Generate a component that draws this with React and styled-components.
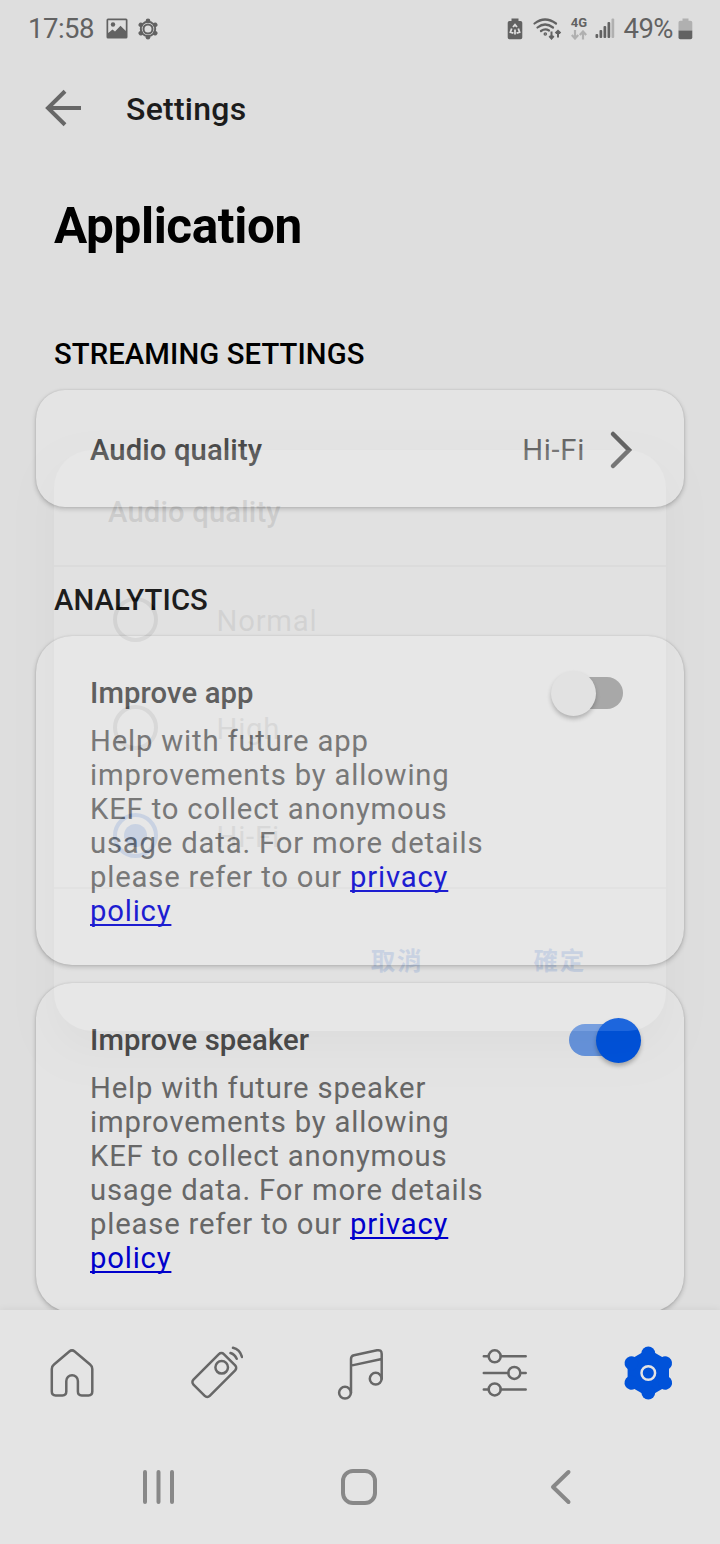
import { useState } from 'react'
import styled, { createGlobalStyle } from 'styled-components'

const GlobalStyle = createGlobalStyle`
    * {
        box-sizing: border-box;
    }

    body {
        margin: 0;
        background: #dedede;
        font-family: Roboto, 'Noto Sans CJK TC', sans-serif;
        font-size: 29.25px;
        line-height: 34px;
    }
`

const Screen = styled('div')`
    display: flex;
    position: relative;
    width: 720px;
    height: 1544px;
    flex-direction: column;
    overflow: hidden;
`

const StatusBar = styled('div')`
    display: flex;
    flex-shrink: 0;
    height: 54px;
    padding: 3px 27px 0 28px;
    align-items: center;
    justify-content: space-between;
    color: #626262;
    font-size: 27.5px;
    letter-spacing: -0.5px;
`

const StatusGroup = styled('div')`
    display: flex;
    align-items: center;
    gap: ${(p) => p.$gap}px;
`

const Header = styled('div')`
    display: flex;
    flex-shrink: 0;
    height: 108px;
    padding-left: 42px;
    align-items: center;
    gap: 42px;
    color: #1c1c1c;
    font-size: 32px;
    font-weight: 500;
    letter-spacing: 0.25px;
`

const HeaderTitle = styled('span')`
    padding-top: 2px;
`

const Content = styled('div')`
    display: flex;
    flex-grow: 1;
    min-height: 0;
    padding: 35px 36px 0;
    flex-direction: column;
    overflow: hidden;
`

const Title = styled('h1')`
    flex-shrink: 0;
    margin: 0 18px 82px;
    color: #000;
    font-size: 49.5px;
    font-weight: 700;
    line-height: 58px;
    letter-spacing: -0.4px;
`

const SectionTitle = styled('h2')`
    flex-shrink: 0;
    margin: 0 18px 19px;
    color: #000;
    font-size: 29.25px;
    font-weight: 500;
    line-height: 34px;
    letter-spacing: 0.1px;
`

const Card = styled('div')`
    display: flex;
    flex-shrink: 0;
    justify-content: space-between;
    background: #e4e4e4;
    box-shadow:
        0 0 2px rgba(0, 0, 0, 0.13),
        0 2px 5px rgba(0, 0, 0, 0.22);
`

const LinkCard = styled(Card)`
    height: 117px;
    margin-bottom: 76px;
    padding: 3px 50px 0 54px;
    align-items: center;
    border-radius: 29px;
`

const SwitchCard = styled(Card)`
    height: 329px;
    margin-bottom: 18px;
    padding: 40px 43.5px 0 54px;
    border-radius: 36px;
`

const Label = styled('div')`
    color: #4a4a4a;
    font-weight: 500;
    letter-spacing: 0.1px;
`

const Value = styled('div')`
    display: flex;
    align-items: center;
    gap: 23px;
    color: #676767;
    letter-spacing: 0.7px;
`

const Texts = styled('div')`
    width: 410px;
`

const Description = styled('p')`
    margin: 14px 0 0;
    color: #676767;
    letter-spacing: 0.82px;

    a {
        color: #0000cc;
        text-decoration: underline;
        text-decoration-thickness: 2px;
        text-underline-offset: 3px;
        text-decoration-skip-ink: none;
    }
`

const Switch = styled('button')`
    display: flex;
    width: 90px;
    height: 45px;
    margin-top: -5.5px;
    padding: 0 18px;
    align-items: center;
    border: 0;
    background: none;
`

const Track = styled('span')`
    display: flex;
    width: 54px;
    height: 32px;
    align-items: center;
    justify-content: ${(p) => (p.$on ? 'flex-end' : 'flex-start')};
    border-radius: 16px;
    background: ${(p) => (p.$on ? '#6693db' : '#9d9d9d')};
`

const Thumb = styled('span')`
    flex-shrink: 0;
    width: 45px;
    height: 45px;
    margin: 0 -18px;
    border-radius: 50%;
    background: ${(p) => (p.$on ? '#0052d9' : '#dfdfdf')};
    box-shadow: 0 3px 4px rgba(0, 0, 0, 0.26);
`

const TabBar = styled('nav')`
    display: flex;
    flex-shrink: 0;
    height: 126px;
    background: #e4e4e4;
    box-shadow: 0 0 8px rgba(0, 0, 0, 0.07);
    z-index: 1;
`

const Tab = styled('div')`
    display: flex;
    flex: 1;
    align-items: center;
    justify-content: center;
    color: #676767;
`

const SystemNav = styled('div')`
    display: flex;
    flex-shrink: 0;
    height: 108px;
    padding: 0 59px 6px 57px;
    background: #e4e4e4;
    z-index: 1;
`

const SystemKey = styled(Tab)`
    color: #888;
`

const Dialog = styled('div')`
    display: flex;
    position: absolute;
    top: 450px;
    left: 54px;
    width: 612px;
    height: 581px;
    flex-direction: column;
    border-radius: 38px;
    background: #fff;
    box-shadow: 0 18px 36px rgba(0, 0, 0, 0.25);
    opacity: 0.112;
    pointer-events: none;
    z-index: 2;
`

const DialogTitle = styled('div')`
    height: 117px;
    padding: 45px 54px 0;
    border-bottom: 2px solid #c8c8c8;
    color: #4a4a4a;
    font-weight: 500;
    letter-spacing: 0.15px;
`

const Options = styled('div')`
    height: 322px;
    border-bottom: 2px solid #d4d4d4;
`

const Option = styled('div')`
    display: flex;
    height: 108px;
    padding: 0 0 3px 58.5px;
    align-items: center;
    gap: 59px;
    color: #808080;
    letter-spacing: 0.8px;
`

const OptionText = styled('span')`
    padding-top: 2px;
`

const Radio = styled('span')`
    display: flex;
    width: 45px;
    height: 45px;
    align-items: center;
    justify-content: center;
    border: 4px solid ${(p) => (p.$checked ? '#0052d9' : '#808080')};
    border-radius: 50%;

    &::after {
        content: '';
        width: 23px;
        height: 23px;
        border-radius: 50%;
        background: ${(p) => (p.$checked ? '#0052d9' : 'transparent')};
    }
`

const DialogActions = styled('div')`
    display: flex;
    padding: 56px 80px 0 0;
    justify-content: flex-end;
    gap: 110px;
    color: #0052d9;
    font-size: 24.5px;
    font-weight: 700;
    letter-spacing: 1.8px;
`

const Stroke = ({ size = 54, width = 2.5, children }) => (
    <svg
        width={size}
        height={size}
        viewBox={`0 0 ${size} ${size}`}
        fill="none"
        stroke="currentColor"
        strokeWidth={width}
        strokeLinecap="round"
        strokeLinejoin="round"
    >
        {children}
    </svg>
)

const PictureIcon = () => (
    <svg width="22" height="21" viewBox="0 0 22 21" fill="currentColor">
        <path
            fillRule="evenodd"
            d="M2 0.500h18q1.500 0 1.500 1.500v17q0 1.500-1.500 1.500h-18q-1.500 0-1.500-1.500v-17q0-1.500 1.500-1.500zM2.200 2.200v12.800l4.300-3.500 2.500 2 5.500-5.700 5.300 5.200V2.200z"
        />
        <circle cx="7" cy="6.500" r="2.200" />
    </svg>
)

const SmallGearIcon = () => (
    <svg width="20" height="22" viewBox="-10 -11 20 22" fill="currentColor">
        {[0, 60, 120, 180, 240, 300].map((a) => (
            <circle key={a} cy="-8.300" r="2.300" transform={`rotate(${a})`} />
        ))}
        <circle r="7.200" fill="none" stroke="currentColor" strokeWidth="2" />
        <circle r="4.500" fill="none" stroke="currentColor" strokeWidth="2" />
    </svg>
)

const RecycleBatteryIcon = () => (
    <svg width="16" height="22" viewBox="0 0 16 22">
        <path
            d="M4.500 0.500h7v2.500h2q1.800 0 1.800 1.800v14.700q0 1.800-1.800 1.800h-11q-1.800 0-1.800-1.800V4.800Q0.700 3 2.500 3h2z"
            fill="currentColor"
        />
        <path
            d="M6 9L8 6.700l2 2.300M11.300 10.500l1.300 3.700-3 1M8 16.500v-5M4.700 10.500l-1.300 3.700 3 1"
            fill="none"
            stroke="#dedede"
            strokeWidth="1.800"
        />
    </svg>
)

const WifiIcon = () => (
    <svg
        width="29"
        height="22"
        viewBox="0 0 29 22"
        fill="none"
        stroke="currentColor"
        strokeWidth="2.200"
        strokeLinecap="round"
    >
        <path d="M1.500 5.500Q12 -2.500 23 5.500M4.500 9.500Q12 3.500 20 9.500M8 13Q12 10 16 12.500" />
        <circle cx="12.300" cy="16" r="0.700" />
        <path
            d="M18.500 13.500v6.500M16.300 18l2.200 2.500 2.200-2.500M25 19.500v-6.500M22.500 15.300l2.500-2.500 2.500 2.500"
            strokeWidth="2"
            strokeLinecap="butt"
        />
    </svg>
)

const Network = styled('div')`
    display: flex;
    width: 17px;
    flex-direction: column;
    align-items: center;
    gap: 2px;
    font-size: 13px;
    font-weight: 700;
    line-height: 11px;
    letter-spacing: 0;
`

const NetworkIcon = () => (
    <Network>
        4G
        <svg width="16" height="10" viewBox="0 0 16 10" fill="none" stroke="#b0b0b0" strokeWidth="2.200">
            <path d="M4 0v8M0.800 5L4 8.500 7.200 5M12 9.500V2M8.800 5L12 1.500 15.200 5" />
        </svg>
    </Network>
)

const SignalIcon = () => (
    <svg width="20" height="21" viewBox="0 0 20 21" fill="currentColor">
        <rect x="0.500" y="16" width="2.700" height="4" rx="1" />
        <rect x="4.500" y="12" width="2.700" height="8" rx="1" />
        <rect x="8.500" y="8" width="2.700" height="12" rx="1" />
        <rect x="12.500" y="4" width="2.700" height="16" rx="1" />
        <rect x="16.500" y="0.500" width="2.700" height="19.500" rx="1" fill="#b0b0b0" />
    </svg>
)

const BatteryIcon = () => (
    <svg width="15" height="22" viewBox="0 0 15 22">
        <path d="M4.500 0.500h6v2.200h2q1.800 0 1.800 1.800v8H0.500v-8q0-1.800 1.800-1.800h2.200z" fill="#b0b0b0" />
        <path d="M0.500 12.500h13.800v7q0 1.800-1.800 1.800H2.300q-1.800 0-1.800-1.800z" fill="currentColor" />
    </svg>
)

const BackArrowIcon = () => (
    <svg width="42" height="42" viewBox="0 0 42 42" fill="none" stroke="#676767" strokeWidth="4">
        <path d="M23 4.300L6 21l17 16.700M6 21h33" />
    </svg>
)

const ChevronIcon = () => (
    <svg
        width="26"
        height="40"
        viewBox="0 0 26 40"
        fill="none"
        stroke="#646464"
        strokeWidth="4.500"
        strokeLinecap="round"
    >
        <path d="M5 4l16 16L5 36" />
    </svg>
)

const HomeIcon = () => (
    <Stroke>
        <path d="M6.800 23Q6.800 20.300 9 18.500L24.300 5.500Q27 3.300 29.700 5.500L45.100 18.500Q47.300 20.300 47.300 23V45.500Q47.300 49.400 43.500 49.400H36.700Q32.900 49.400 32.900 45.500V35A5.800 5.800 0 0 0 21.300 35V45.500Q21.300 49.400 17.500 49.400H10.600Q6.800 49.400 6.800 45.500Z" />
    </Stroke>
)

const RemoteIcon = () => (
    <Stroke>
        <rect
            x="-21.500"
            y="-11.500"
            width="43"
            height="23"
            rx="3.500"
            transform="translate(25.300 29) rotate(-45)"
        />
        <circle cx="32.700" cy="21.300" r="6.300" />
        <path d="M41.500 7Q45.500 8 47.700 12.800M44 1.800Q51 3.500 53 11" />
    </Stroke>
)

const MusicIcon = () => (
    <Stroke>
        <circle cx="12" cy="46.700" r="5.900" />
        <circle cx="42.700" cy="32.700" r="5.900" />
        <path d="M18 46.700V13Q18 9.800 21 9.200L44 4.300Q48.700 3.400 48.700 8V32.700M18 19.600L48.700 13" />
    </Stroke>
)

const SlidersIcon = () => (
    <Stroke>
        <path d="M6.800 10.300H11.700M23.700 10.300H48.700M6.800 26.900H31.300M43.300 26.900H48.700M6.800 43.400H11.700M23.700 43.400H48.700" />
        <circle cx="17.700" cy="10.300" r="6" />
        <circle cx="37.300" cy="26.900" r="6" />
        <circle cx="17.700" cy="43.400" r="6" />
    </Stroke>
)

const GearIcon = () => (
    <svg width="54" height="54" viewBox="-27.300 -27 54 54" fill="#0052d9">
        <path d="M0 -23.900L20.700 -12V12L0 23.900L-20.700 12V-12Z" />
        {[0, 60, 120, 180, 240, 300].map((a) => (
            <circle key={a} cy="-19.500" r="6.900" transform={`rotate(${a})`} />
        ))}
        <circle r="6.800" fill="none" stroke="#e4e4e4" strokeWidth="2.500" />
    </svg>
)

const tabs = [HomeIcon, RemoteIcon, MusicIcon, SlidersIcon, GearIcon]
const qualities = ['Normal', 'High', 'Hi-Fi']

const Toggle = ({ on, onClick }) => (
    <Switch onClick={onClick}>
        <Track $on={on}>
            <Thumb $on={on} />
        </Track>
    </Switch>
)

const Analytics = ({ name, initial }) => {
    const [on, setOn] = useState(initial)

    return (
        <SwitchCard>
            <Texts>
                <Label>Improve {name}</Label>
                <Description>
                    Help with future {name} improvements by allowing KEF to
                    collect anonymous usage data. For more details please refer
                    to our <a href="#privacy">privacy policy</a>
                </Description>
            </Texts>
            <Toggle on={on} onClick={() => setOn(!on)} />
        </SwitchCard>
    )
}

const App = () => {
    const [quality] = useState('Hi-Fi')

    return (
        <Screen>
            <GlobalStyle />
            <StatusBar>
                <StatusGroup $gap={12}>
                    <span>17:58</span>
                    <StatusGroup $gap={10}>
                        <PictureIcon />
                        <SmallGearIcon />
                    </StatusGroup>
                </StatusGroup>
                <StatusGroup $gap={8}>
                    <StatusGroup $gap={10}>
                        <RecycleBatteryIcon />
                        <WifiIcon />
                    </StatusGroup>
                    <StatusGroup $gap={8}>
                        <NetworkIcon />
                        <SignalIcon />
                    </StatusGroup>
                    <StatusGroup $gap={5}>
                        <span>49%</span>
                        <BatteryIcon />
                    </StatusGroup>
                </StatusGroup>
            </StatusBar>
            <Header>
                <BackArrowIcon />
                <HeaderTitle>Settings</HeaderTitle>
            </Header>
            <Content>
                <Title>Application</Title>
                <SectionTitle>STREAMING SETTINGS</SectionTitle>
                <LinkCard>
                    <Label>Audio quality</Label>
                    <Value>
                        {quality}
                        <ChevronIcon />
                    </Value>
                </LinkCard>
                <SectionTitle>ANALYTICS</SectionTitle>
                <Analytics name="app" initial={false} />
                <Analytics name="speaker" initial={true} />
            </Content>
            <TabBar>
                {tabs.map((Icon, i) => (
                    <Tab key={i}>
                        <Icon />
                    </Tab>
                ))}
            </TabBar>
            <SystemNav>
                <SystemKey>
                    <Stroke size={40} width={4}>
                        <path d="M7 5v30M20.500 5v30M34 5v30" />
                    </Stroke>
                </SystemKey>
                <SystemKey>
                    <Stroke size={40} width={4}>
                        <rect x="4" y="4" width="32" height="32" rx="10" />
                    </Stroke>
                </SystemKey>
                <SystemKey>
                    <Stroke size={40} width={4}>
                        <path d="M28.500 5L13 20l15.500 15" />
                    </Stroke>
                </SystemKey>
            </SystemNav>
            <Dialog>
                <DialogTitle>Audio quality</DialogTitle>
                <Options>
                    {qualities.map((q) => (
                        <Option key={q}>
                            <Radio $checked={q === quality} />
                            <OptionText>{q}</OptionText>
                        </Option>
                    ))}
                </Options>
                <DialogActions>
                    <span>取消</span>
                    <span>確定</span>
                </DialogActions>
            </Dialog>
        </Screen>
    )
}

export default App
